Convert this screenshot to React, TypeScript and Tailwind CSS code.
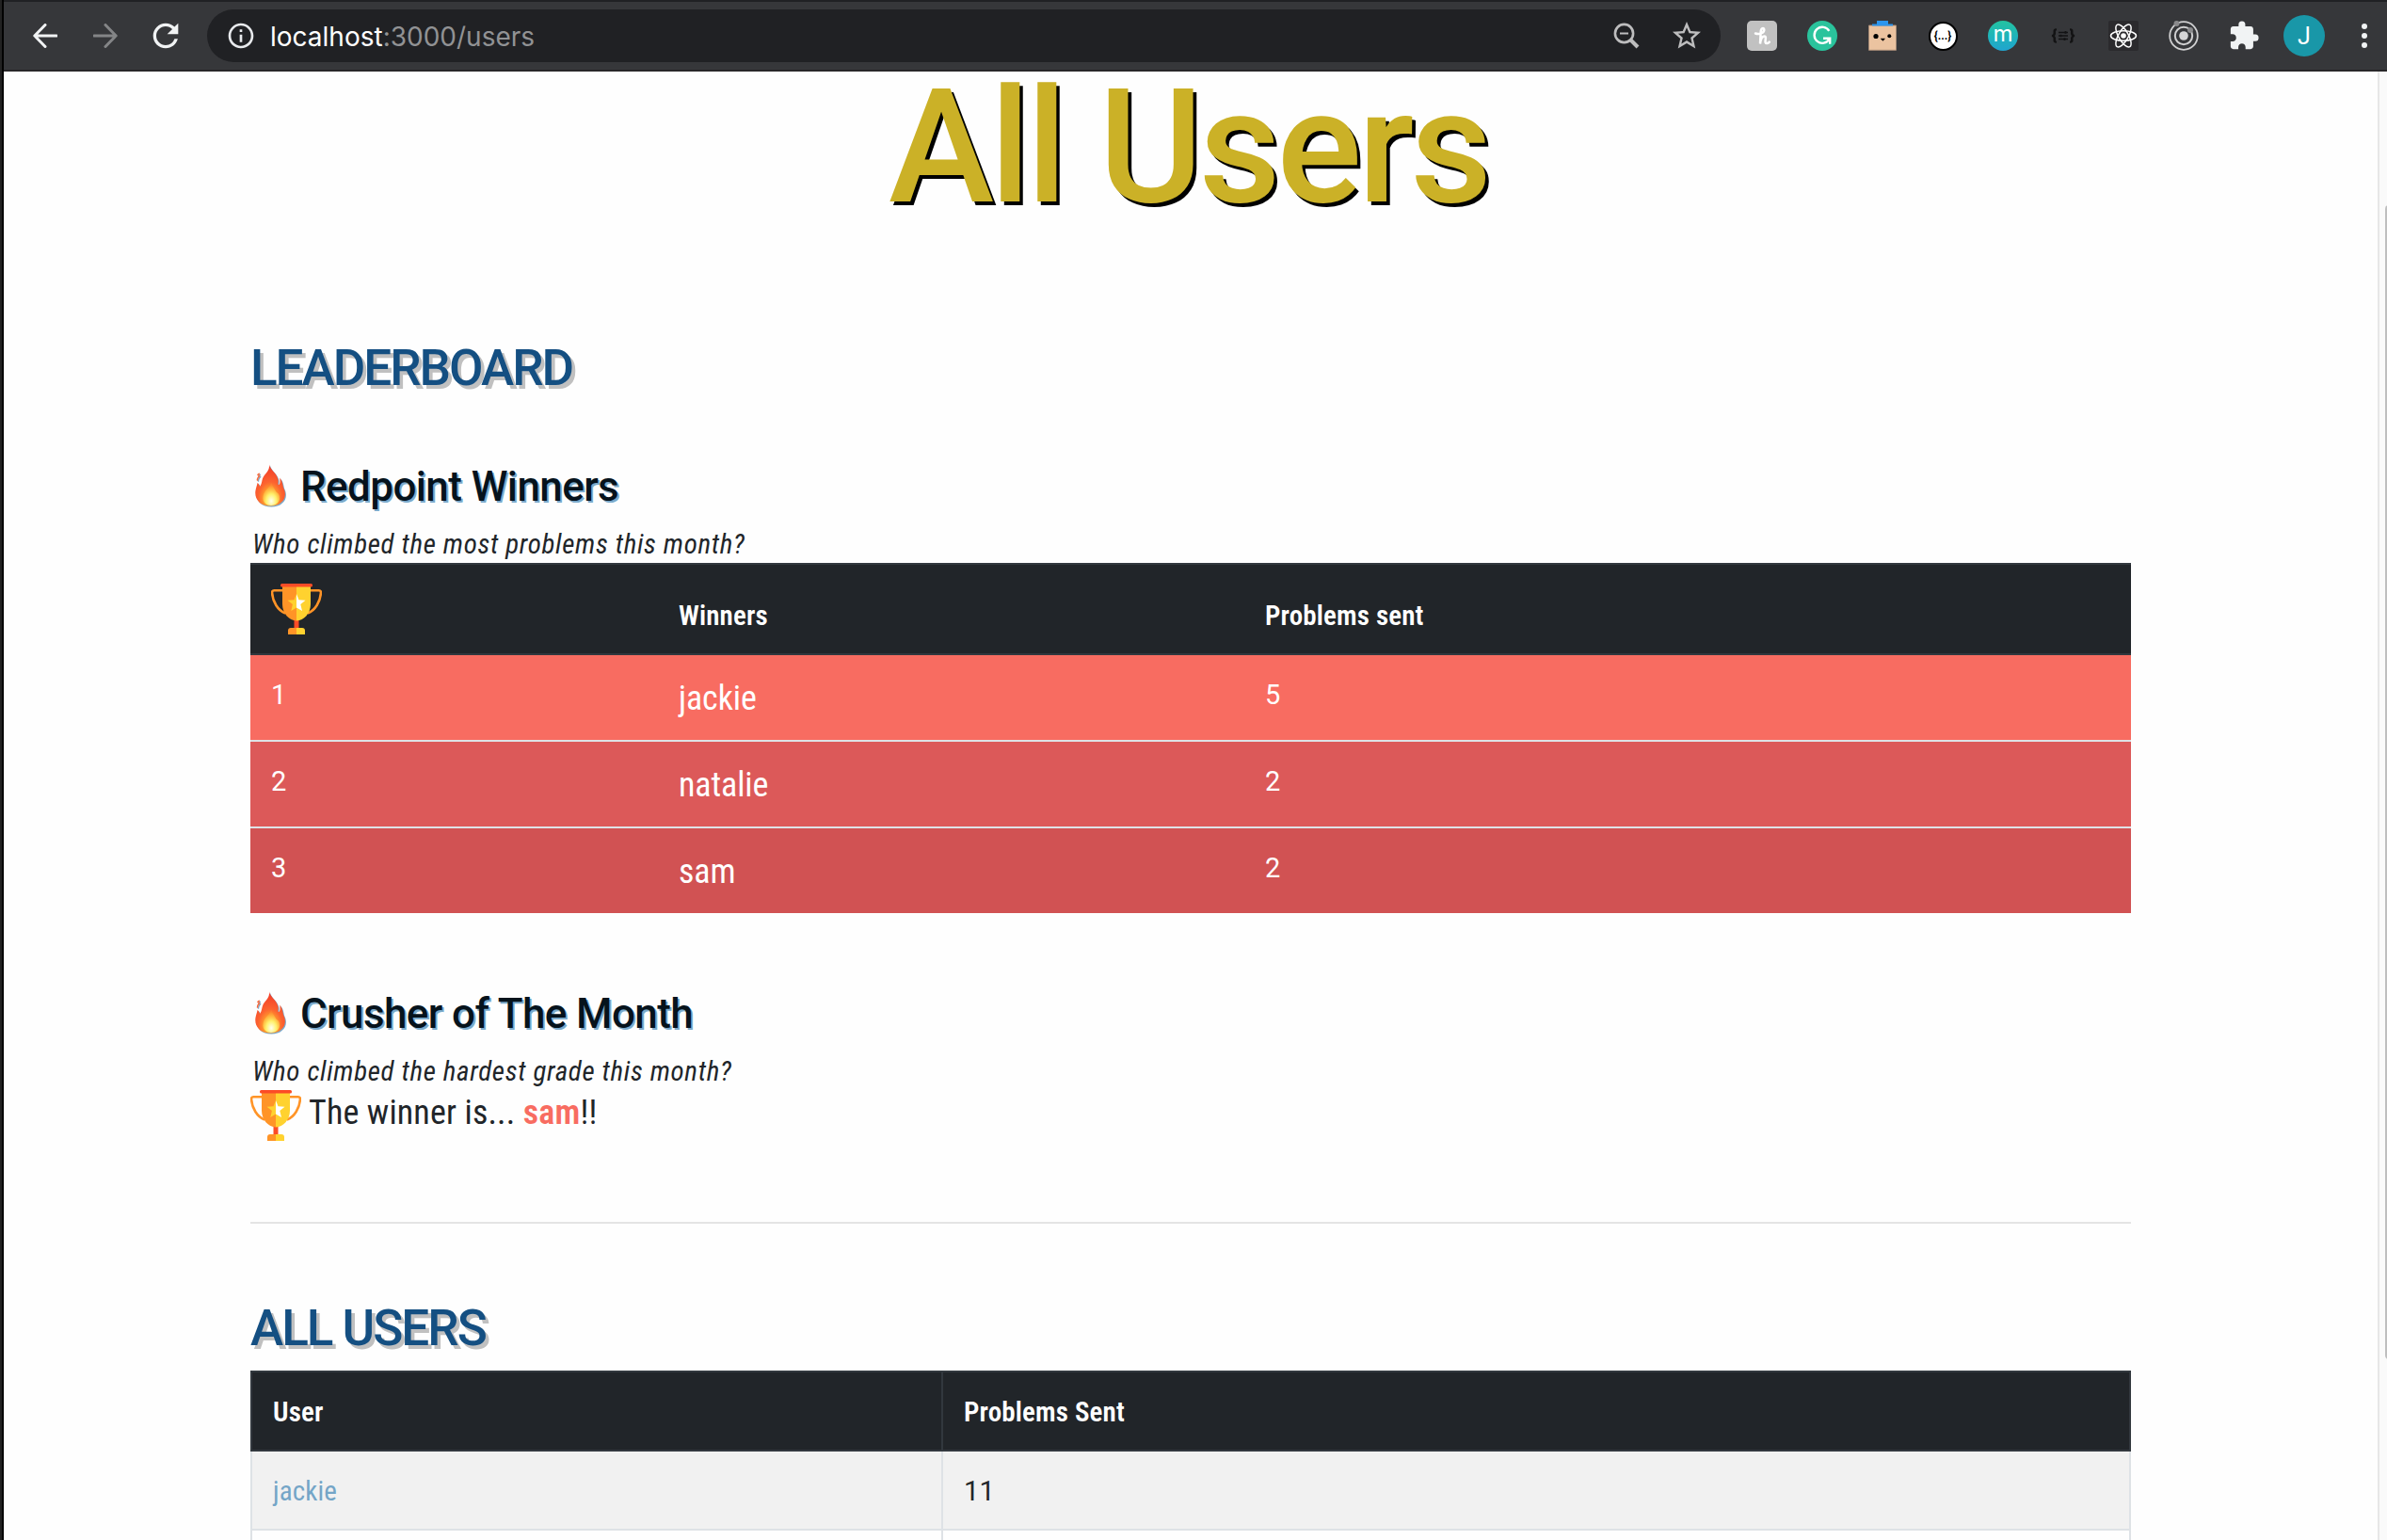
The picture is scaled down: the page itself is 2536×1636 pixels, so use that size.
import React from "react";
import { MdRefresh, MdInfoOutline, MdStarBorder, MdExtension } from "react-icons/md";

function Arrow({ flip }: { flip?: boolean }) {
  return (
    <svg viewBox="0 0 26 26" className={flip ? "h-[26px] w-[26px] rotate-180 text-[#848587]" : "h-[26px] w-[26px] text-[#f1f3f4]"} fill="none" stroke="currentColor" strokeWidth="3" strokeLinecap="round">
      <path d="M25 13H2M13 1.500 1.800 13 13 24.500" strokeLinejoin="round" />
    </svg>
  );
}

function ZoomOut() {
  return (
    <svg viewBox="0 0 28 28" className="h-7 w-7" fill="none" stroke="#bdbdbe">
      <circle cx="11.500" cy="11.500" r="9.600" strokeWidth="2.600" />
      <path d="M7 11.500h9" strokeWidth="2" />
      <path d="m18.500 18.500 7.500 7.500" strokeWidth="4" />
    </svg>
  );
}

function Honey() {
  return (
    <svg viewBox="0 0 32 32" className="h-8 w-8">
      <rect width="32" height="32" rx="5" fill="#c1c1c1" />
      <path d="M9 13.500c3.500 1.500 9.500-.5 9.300-4-.2-2.500-3.300-2-3.600 2L14 24.500c.6-4.500 2.400-8 4.600-8 2.600 0 .4 4.500 1 6.500.6 1.600 2.800 1.200 4.200-.4" fill="none" stroke="#fff" strokeWidth="2.500" strokeLinecap="round" />
    </svg>
  );
}

function Grammarly() {
  return (
    <svg viewBox="0 0 32 32" className="h-8 w-8">
      <circle cx="16" cy="16" r="16" fill="#2ac39c" />
      <path d="M23.300 10.800A8.500 8.500 0 1 0 23.500 19.500M17 18.700h7.200v6" fill="none" stroke="#fff" strokeWidth="2.400" />
    </svg>
  );
}

function BoxFace() {
  return (
    <svg viewBox="0 0 32 32" className="h-8 w-8">
      <path d="M1.500 5h29v26.300h-29z" fill="#ebc3a0" stroke="#a58a76" />
      <path d="M10 0h12v3.500h5v2H5v-2h5z" fill="#2d96ee" />
      <circle cx="9" cy="16.500" r="2.600" />
      <circle cx="23.300" cy="16.300" r="2" />
      <path d="M14.500 19.300h3.800l-1.900 1.700z" stroke="#000" strokeLinejoin="round" />
    </svg>
  );
}

function ReactLogo() {
  return (
    <svg viewBox="-16 -16 32 32" className="h-8 w-8" fill="none" stroke="#fff" strokeWidth="1.500">
      <rect x="-16" y="-16" width="32" height="32" rx="2" fill="#2b2a2d" stroke="none" />
      <ellipse rx="13.500" ry="5.200" />
      <ellipse rx="13.500" ry="5.200" transform="rotate(60)" />
      <ellipse rx="13.500" ry="5.200" transform="rotate(120)" />
      <circle r="2.800" fill="#fff" stroke="none" />
    </svg>
  );
}

function Rings() {
  return (
    <svg viewBox="-16 -16 32 32" className="h-8 w-8" fill="none" stroke="#d0d0d1">
      <circle r="14.800" strokeWidth="1.800" />
      <circle r="9.200" strokeWidth="2" />
      <circle r="4.800" fill="#d6d6d7" stroke="none" />
      <circle cx="-7.500" cy="-13" r="3" fill="#8a8a8c" stroke="none" />
      <circle cx="7" cy="-6" r="3" fill="#8a8a8c" stroke="none" />
    </svg>
  );
}

function Sliders() {
  return (
    <svg viewBox="0 0 26 18" preserveAspectRatio="none" className="h-4 w-[26px]" fill="none" stroke="#131314">
      <path d="M6 1.500C3 1.500 3.800 3 3.800 5.500S3 8.800 1 9c2 .2 2.800 1 2.800 3.500S3 16.500 6 16.500M20 1.500c3 0 2.200 1.500 2.200 4S23 8.800 25 9c-2 .2-2.800 1-2.800 3.500s.8 4-2.200 4" strokeWidth="2.500" />
      <path d="M8 5h10M8 9h10M8 13h10" strokeWidth="1.600" />
      <path d="M15.500 3.500v3M10.500 7.500v3M14.500 11.500v3" strokeWidth="1.800" />
    </svg>
  );
}

function Trophy() {
  return (
    <svg viewBox="0 0 54 54" className="h-[54px] w-[54px] shrink-0">
      <path d="M13 7.200H3.200C1.200 7.200 1 8.500 1.100 10c.6 9 6 18.500 14 21.500M41 7.200h9.800c2 0 2.200 1.300 2.100 2.800-.6 9-6 18.500-14 21.500" fill="none" stroke="#ff9427" strokeWidth="2.600" />
      <path d="M24.500 38h5v10h-5z" fill="#fc4c26" />
      <path d="M12 2.500h15v37C19 39.500 12 31 12 22z" fill="#ff9427" />
      <path d="M42 2.500H27v37C35 39.500 42 31 42 22z" fill="#ffd22f" />
      <rect x="10" y="0" width="34" height="3.400" rx="1.500" fill="#fc4c26" />
      <path d="M27 11v14.500L21.300 29l1.600-7L17.500 17.800l7-.5z" fill="#ffd22f" />
      <path d="M27 11v14.500l6 3.500-1.700-7 5.200-4.200-7-.5z" fill="#fff" />
      <path d="M27 47h-6c-2 0-3 1-3 3v4h9z" fill="#ff9427" />
      <path d="M27 47h6c2 0 3 1 3 3v4h-9z" fill="#ffd22f" />
    </svg>
  );
}

function Fire() {
  return (
    <svg viewBox="0 0 36 46" className="h-[46px] w-9 shrink-0 overflow-visible drop-shadow-[1.8px_1.8px_0px_#7baacb]">
      <defs>
        <radialGradient id="flame" cx="0.5" cy="0.82" r="0.8">
          <stop offset="0" stopColor="#ffc83c" />
          <stop offset="0.3" stopColor="#ff962c" />
          <stop offset="0.5" stopColor="#fc6430" />
          <stop offset="1" stopColor="#f23a28" />
        </radialGradient>
        <radialGradient id="core" cx="0.5" cy="0.8" r="0.7">
          <stop offset="0" stopColor="#fffff0" />
          <stop offset="0.45" stopColor="#fff06a" />
          <stop offset="1" stopColor="#ffb03a" stopOpacity="0.2" />
        </radialGradient>
      </defs>
      <path d="M16 .5c1 5.500 8 9 9.500 16 .5 2.500-.5 5 .3 5.500 1.500.5 2.400-3.500 1.200-7.500 3.500 4 3 7 4.500 11.500C36 35.500 29.500 44.500 17.500 44.500S0 36.500 1.500 28c.7-3.500 1.500-5 2-8 1.500 1 2 2.500 2.500 4C9 20 7.500 17 10.500 12.500 14 8 16.500 5.500 16 .5z" fill="url(#flame)" />
      <path d="M18 20c-1 5-7 7-8.500 14S14 44 18 44s10.500-3 9-10c-1-4-3-3-4.500-6s-2.500-4-4.500-8z" fill="url(#core)" />
      <path d="M3.500 17c-.5-1.500 1-3 2-4.500M4 11.500c.4-.6.800-.8 1.200-1.200" fill="none" stroke="#fb6a3c" strokeWidth="1.600" strokeLinecap="round" />
    </svg>
  );
}

function Slot({ children }: { children?: React.ReactNode }) {
  return <div className="flex w-16 shrink-0 items-center justify-center">{children}</div>;
}

function Toolbar() {
  return (
    <header className="flex h-[76px] shrink-0 items-center border-t-2 border-b-2 border-t-[#202124] border-b-[#282729] bg-[#36373a]">
      <div className="flex w-[216px] shrink-0 items-center">
        <div className="ml-[31px] w-[26px]"><Arrow /></div>
        <div className="ml-[38px] w-[26px]"><Arrow flip /></div>
        <MdRefresh className="ml-[31px] h-10 w-10 shrink-0 text-[#f1f3f4]" />
      </div>
      <div className="flex h-14 w-[1608px] shrink-0 items-center rounded-full bg-[#202124] pl-5">
        <MdInfoOutline className="h-8 w-8 text-[#e8eaed]" />
        <div className="ml-[15px] flex-1 pt-0.5 font-[Inter] text-[28px] leading-[34px] whitespace-nowrap text-[#919294]">
          <span className="text-white">localhost</span>:3000/users
        </div>
        <ZoomOut />
        <MdStarBorder className="mr-[18px] ml-[32px] h-[36px] w-[36px] text-[#bdbdbe]" />
      </div>
      <div className="ml-3 flex h-full w-[692px] shrink-0 items-center">
        <Slot><Honey /></Slot>
        <Slot><Grammarly /></Slot>
        <Slot><BoxFace /></Slot>
        <Slot>
          <div className="flex h-[31px] w-[31px] items-center justify-center rounded-full border-2 border-black bg-white font-[Roboto] text-[12px] leading-none font-bold text-black">{"{...}"}</div>
        </Slot>
        <Slot>
          <div className="flex h-8 w-8 items-center justify-center rounded-full bg-linear-to-b from-[#24c3a0] to-[#21a4cf] pb-[5px] font-[Inter] text-[24px] leading-none text-white">m</div>
        </Slot>
        <Slot><Sliders /></Slot>
        <Slot><ReactLogo /></Slot>
        <Slot><Rings /></Slot>
        <Slot><MdExtension className="h-[34px] w-[34px] text-[#f1f3f4]" /></Slot>
        <Slot>
          <div className="flex h-11 w-11 items-center justify-center rounded-full bg-[#1997a8] font-[Roboto] text-[25px] leading-none text-white">J</div>
        </Slot>
        <div className="flex w-[52px] flex-col gap-1 pl-[29px]">
          <span className="h-1.5 w-1.5 rounded-full bg-[#f1f3f4]" />
          <span className="h-1.5 w-1.5 rounded-full bg-[#f1f3f4]" />
          <span className="h-1.5 w-1.5 rounded-full bg-[#f1f3f4]" />
        </div>
      </div>
    </header>
  );
}

const winners = [
  { place: 1, name: "jackie", sent: 5, tone: "h-[90px] bg-[#f86c61]" },
  { place: 2, name: "natalie", sent: 2, tone: "h-[92px] border-t-2 border-[#dee2e6] bg-[#dc5959]" },
  { place: 3, name: "sam", sent: 2, tone: "h-[92px] border-t-2 border-[#dee2e6] bg-[#d15253]" },
];

export default function App() {
  return (
    <div className="flex h-[1636px] w-[2536px] overflow-hidden bg-[#fefefe] text-[#212529]">
      <div className="w-0.5 shrink-0 bg-[#222]" />
      <div className="w-0.5 shrink-0 bg-black" />
      <div className="flex min-w-0 flex-1 flex-col">
        <Toolbar />
        <div className="flex min-h-0 flex-1">
          <main className="flex w-[2522px] shrink-0 flex-col pr-[262px] pl-[262px] font-[Roboto] text-[29px] tracking-[0.005em] [font-stretch:75%]">
            <h1 className="h-[161px] shrink-0 pr-[5px] text-center text-[169px] leading-[161px] font-medium tracking-[-4.2px] whitespace-nowrap text-[#cbb127] [font-stretch:100%] [text-shadow:3.6px_3.6px_0_#000]">All Users</h1>
            <h2 className="mt-[122px] h-16 shrink-0 text-[53px] leading-[64px] font-medium tracking-[-2px] text-[#144f82] [font-stretch:100%] [text-shadow:3.6px_3.6px_0_#c0c0c0]">LEADERBOARD</h2>
            <h3 className="mt-[68px] flex h-[52px] shrink-0 text-[44px] leading-[52px] font-medium tracking-[-0.6px] text-[#06131c] [font-stretch:100%] [text-shadow:1.8px_1.8px_0_#7baacb]">
              <span className="mt-0.5 mr-[13px] ml-1"><Fire /></span>
              Redpoint Winners
            </h3>
            <p className="mt-[15px] h-10 shrink-0 pl-0.5 leading-10 tracking-[0.67px] italic">Who climbed the most problems this month?</p>
            <section className="w-[1998px] shrink-0 text-white">
              <div className="flex h-[98px] border-y-2 border-[#32383e] bg-[#212529] font-semibold">
                <div className="w-[433px] pt-5 pl-[22px]"><Trophy /></div>
                <div className="w-[623px] pt-[34px] pl-[22px] leading-10">Winners</div>
                <div className="pt-[34px] pl-[22px] leading-10">Problems sent</div>
              </div>
              {winners.map((w) => (
                <div key={w.name} className={`flex ${w.tone}`}>
                  <div className="w-[433px] pt-[22px] pl-[22px] leading-10 [font-stretch:100%]">{w.place}</div>
                  <div className="w-[623px] pt-[23px] pl-[22px] text-[36px] leading-[47px] tracking-[-0.1px]">{w.name}</div>
                  <div className="pt-[22px] pl-[22px] leading-10 [font-stretch:100%]">{w.sent}</div>
                </div>
              ))}
            </section>
            <h3 className="mt-[81px] flex h-[52px] shrink-0 text-[44px] leading-[52px] font-medium tracking-[-0.6px] text-[#06131c] [font-stretch:100%] [text-shadow:1.8px_1.8px_0_#7baacb]">
              <span className="mt-0.5 mr-[13px] ml-1"><Fire /></span>
              Crusher of The Month
            </h3>
            <p className="mt-[15px] h-10 shrink-0 pl-0.5 leading-10 tracking-[0.67px] italic">Who climbed the hardest grade this month?</p>
            <div className="flex h-[54px] shrink-0 text-[36px] leading-[49px]">
              <Trophy />
              <div className="ml-2 whitespace-pre">The winner is... <span className="font-semibold text-[#f86c61]">sam</span>!!</div>
            </div>
            <hr className="mt-[86px] h-0.5 shrink-0 border-0 bg-[#e4e4e4]" />
            <h2 className="mt-[79px] h-16 shrink-0 text-[53px] leading-[64px] font-medium tracking-[-2px] text-[#144f82] [font-stretch:100%] [text-shadow:3.6px_3.6px_0_#c0c0c0]">ALL USERS</h2>
            <section className="mt-[13px] w-[1998px] shrink-0">
              <div className="flex h-[86px] border-2 border-[#32383e] bg-[#212529] leading-[84px] font-semibold text-white">
                <div className="w-[734px] border-r-2 border-[#32383e] pl-[22px]">User</div>
                <div className="pl-[22px]">Problems Sent</div>
              </div>
              <div className="flex h-[84px] border-x-2 border-b-2 border-[#dee2e6] bg-[#f1f1f1] leading-[84px]">
                <div className="w-[734px] border-r-2 border-[#dee2e6] pl-[22px] text-[#74a5c7]">jackie</div>
                <div className="pl-[22px] [font-stretch:100%]">11</div>
              </div>
              <div className="flex h-[84px] border-x-2 border-b-2 border-[#dee2e6]">
                <div className="w-[734px] border-r-2 border-[#dee2e6]" />
              </div>
            </section>
          </main>
          <div className="w-2.5 shrink-0 border-l-2 border-[#e7e7e7] bg-[#fafafa] pt-[142px] pl-1.5">
            <div className="h-[1226px] w-2 rounded-full bg-[#bfbfbf]" />
          </div>
        </div>
      </div>
    </div>
  );
}
